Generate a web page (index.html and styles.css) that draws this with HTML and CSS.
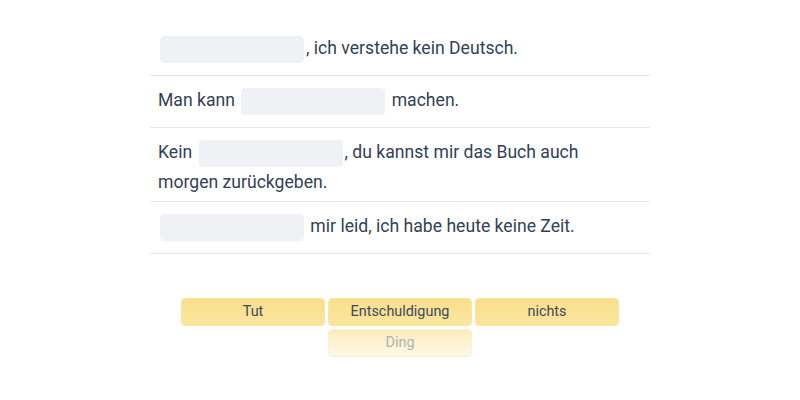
FILE: index.html
```html
<!DOCTYPE html>
<html lang="de">
<head>
<meta charset="utf-8">
<link rel="stylesheet" href="styles.css">
</head>
<body>
<div class="exercise">
  <div class="rows">
    <div class="row"><span class="blank"></span>, ich verstehe kein Deutsch.</div>
    <div class="row">Man kann <span class="blank"></span> machen.</div>
    <div class="row">Kein <span class="blank"></span>, du kannst mir das Buch auch<br>morgen zurückgeben.</div>
    <div class="row"><span class="blank"></span> mir leid, ich habe heute keine Zeit.</div>
  </div>
  <div class="options">
    <div class="chip">Tut</div>
    <div class="chip">Entschuldigung</div>
    <div class="chip">nichts</div>
    <div class="chip used">Ding</div>
  </div>
</div>
</body>
</html>
```
FILE: styles.css
```css
html, body {
  margin: 0;
  padding: 0;
  background: #ffffff;
}
body {
  font-family: Roboto, "Liberation Sans", sans-serif;
  color: #334155;
}
.exercise {
  width: 500px;
  margin: 0 auto;
  padding-top: 24px;
}
.row {
  font-size: 17.6px;
  line-height: 22px;
  padding: 8px 8px;
  border-bottom: 1px solid #e5e7eb;
}
.blank {
  display: inline-block;
  width: 144px;
  height: 27px;
  margin: 4px 2px;
  vertical-align: middle;
  background: #f0f1f4;
  border-radius: 4px;
}
.options {
  display: flex;
  flex-wrap: wrap;
  justify-content: center;
  gap: 3px;
  width: 440px;
  margin: 44px auto 0;
}
.chip {
  width: 144px;
  height: 28px;
  box-sizing: border-box;
  border: 1px solid #f9e4a0;
  border-radius: 4px;
  background: linear-gradient(#f8df8b, #fbe69f);
  font-size: 14.4px;
  line-height: 26px;
  text-align: center;
  color: #3d4a5c;
}
.chip.used {
  border-color: #fdf1cc;
  background: linear-gradient(#fbecbd, #fef8e6);
  color: #b0b3b4;
}
```
